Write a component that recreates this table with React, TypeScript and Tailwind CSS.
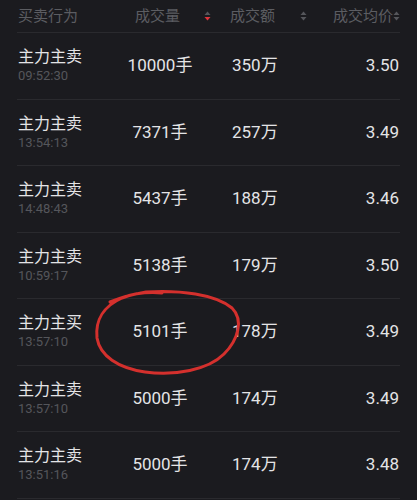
import React from "react";

const rows = [
  { side: "主力主卖", time: "09:52:30", vol: "10000手", amt: "350万", price: "3.50" },
  { side: "主力主卖", time: "13:54:13", vol: "7371手", amt: "257万", price: "3.49" },
  { side: "主力主卖", time: "14:48:43", vol: "5437手", amt: "188万", price: "3.46" },
  { side: "主力主卖", time: "10:59:17", vol: "5138手", amt: "179万", price: "3.50" },
  { side: "主力主买", time: "13:57:10", vol: "5101手", amt: "178万", price: "3.49" },
  { side: "主力主卖", time: "13:57:10", vol: "5000手", amt: "174万", price: "3.49" },
  { side: "主力主卖", time: "13:51:16", vol: "5000手", amt: "174万", price: "3.48" },
];

function SortIcon({ active }: { active?: boolean }) {
  return (
    <svg width="7" height="10" viewBox="0 0 7 10" className="shrink-0">
      <path d="M3.5 0.5 L6.5 4 L0.5 4 Z" fill="#55565b" />
      <path d="M0.5 6 L6.5 6 L3.5 9.5 Z" fill={active ? "#e0333a" : "#55565b"} />
    </svg>
  );
}

export default function App() {
  return (
    <div
      className="relative w-[417px] h-[500px] overflow-hidden bg-[#1b1b1f] px-[17px]"
      style={{ fontFamily: 'Roboto, "Noto Sans CJK SC", sans-serif' }}
    >
      <div className="flex h-[33px] items-center whitespace-nowrap border-b border-[#2a2a2e] text-[15px] text-[#5c5d62]">
        <div className="w-[85px] pl-[1px]">买卖行为</div>
        <div className="flex w-[116px] items-center">
          <span className="ml-[33px]">成交量</span>
          <span className="ml-[24px]"><SortIcon active /></span>
        </div>
        <div className="flex w-[110px] items-center">
          <span className="ml-[12px]">成交额</span>
          <span className="ml-[25px]"><SortIcon /></span>
        </div>
        <div className="flex flex-1 items-center justify-end">
          <span>成交均价</span>
          <SortIcon />
        </div>
      </div>

      {rows.map((r, i) => (
        <div key={i} className="flex h-[66.5px] items-center border-b border-[#2a2a2e]">
          <div className="w-[85px] pl-[1px] flex flex-col">
            <span className="text-[16px] leading-[20px] text-[#e4e4e6]">{r.side}</span>
            <span className="text-[13px] leading-[17px] text-[#55565b]">{r.time}</span>
          </div>
          <div className="w-[116px] text-center text-[17px] text-[#e4e4e6]">{r.vol}</div>
          <div className="w-[110px] pl-[14px] text-[17px] text-[#e4e4e6]">{r.amt}</div>
          <div className="flex-1 pr-[1px] text-right text-[17px] text-[#e4e4e6]">{r.price}</div>
        </div>
      ))}

      <svg
        className="pointer-events-none absolute left-0 top-0"
        width="417"
        height="500"
        viewBox="0 0 417 500"
      >
        <path
          d="M110 302 C 122 297, 134 294, 146 292 C 180 290, 215 294, 232 308 C 244 320, 238 340, 224 354 C 208 370, 175 376, 145 372 C 118 368, 100 356, 97 338 C 95 320, 104 306, 122 298 C 135 293, 150 292, 162 293"
          fill="none"
          stroke="#d4302d"
          strokeWidth="3"
          strokeLinecap="round"
        />
      </svg>
    </div>
  );
}
